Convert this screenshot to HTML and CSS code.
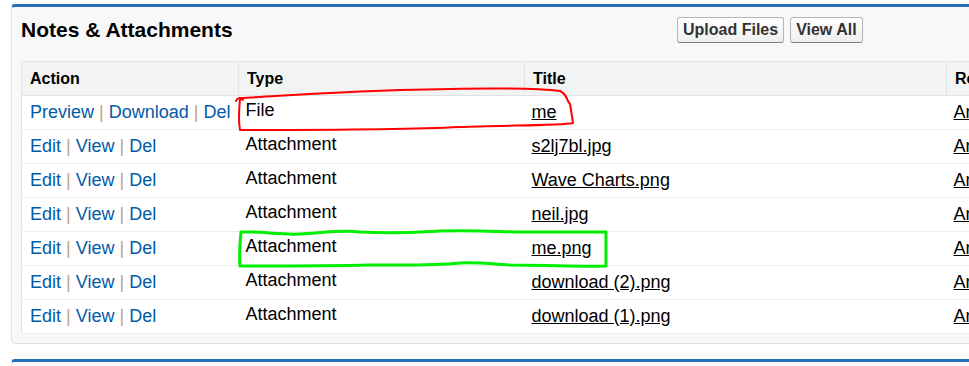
FILE: index.html
```html
<!DOCTYPE html>
<html>
<head>
<meta charset="utf-8">
<link rel="stylesheet" href="styles.css">
</head>
<body>
<div class="panel">
  <div class="panel-head">
    <h2 class="panel-title">Notes &amp; Attachments</h2>
    <div class="panel-buttons">
      <button class="btn">Upload Files</button>
      <button class="btn">View All</button>
    </div>
  </div>
  <table class="list">
    <colgroup>
      <col class="c-action"><col class="c-type"><col class="c-title"><col class="c-rel">
    </colgroup>
    <thead>
      <tr><th>Action</th><th>Type</th><th>Title</th><th>Related To</th></tr>
    </thead>
    <tbody>
      <tr>
        <td class="actions"><a>Preview</a> <span class="sep">|</span> <a>Download</a> <span class="sep">|</span> <a>Del</a></td>
        <td class="type">File</td>
        <td class="title"><a>me</a></td>
        <td class="rel"><a>Andrew</a></td>
      </tr>
      <tr>
        <td class="actions"><a>Edit</a> <span class="sep">|</span> <a>View</a> <span class="sep">|</span> <a>Del</a></td>
        <td class="type">Attachment</td>
        <td class="title"><a>s2lj7bl.jpg</a></td>
        <td class="rel"><a>Andrew</a></td>
      </tr>
      <tr>
        <td class="actions"><a>Edit</a> <span class="sep">|</span> <a>View</a> <span class="sep">|</span> <a>Del</a></td>
        <td class="type">Attachment</td>
        <td class="title"><a>Wave Charts.png</a></td>
        <td class="rel"><a>Andrew</a></td>
      </tr>
      <tr>
        <td class="actions"><a>Edit</a> <span class="sep">|</span> <a>View</a> <span class="sep">|</span> <a>Del</a></td>
        <td class="type">Attachment</td>
        <td class="title"><a>neil.jpg</a></td>
        <td class="rel"><a>Andrew</a></td>
      </tr>
      <tr>
        <td class="actions"><a>Edit</a> <span class="sep">|</span> <a>View</a> <span class="sep">|</span> <a>Del</a></td>
        <td class="type">Attachment</td>
        <td class="title"><a>me.png</a></td>
        <td class="rel"><a>Andrew</a></td>
      </tr>
      <tr>
        <td class="actions"><a>Edit</a> <span class="sep">|</span> <a>View</a> <span class="sep">|</span> <a>Del</a></td>
        <td class="type">Attachment</td>
        <td class="title"><a>download (2).png</a></td>
        <td class="rel"><a>Andrew</a></td>
      </tr>
      <tr>
        <td class="actions"><a>Edit</a> <span class="sep">|</span> <a>View</a> <span class="sep">|</span> <a>Del</a></td>
        <td class="type">Attachment</td>
        <td class="title"><a>download (1).png</a></td>
        <td class="rel"><a>Andrew</a></td>
      </tr>
    </tbody>
  </table>
</div>
<div class="panel panel-next"></div>

<svg class="marks" width="969" height="366" viewBox="0 0 969 366">
  <path class="mark-red" d="M243,100 Q238,96 236,101 M240,98 C280,96 330,92 400,90 C470,88 530,87 560,91 C568,95 566,100 570,104 C571,110 572,116 573,123 C560,126 500,125 460,127 C400,130 300,130 240,130 C238,120 239,110 240,99"/>
  <path class="mark-green" d="M241,232 C260,231 280,235 300,234 C330,232 345,230 360,232 C400,234 420,232 440,231 C480,230 500,232 520,232 C560,232 580,232 606,232 L606,266 C570,267 540,265 510,265 C490,264 480,262 460,263 C430,266 400,265 370,265 C330,266 290,266 240,266 C239,255 240,243 241,232"/>
</svg>
</body>
</html>
```
FILE: styles.css
```css
html, body {
  margin: 0;
  padding: 0;
  background: #ffffff;
  overflow: hidden;
  width: 969px;
  height: 366px;
}

body {
  position: relative;
  font-family: "Liberation Sans", Arial, sans-serif;
  color: #000;
}

.panel {
  box-sizing: border-box;
  width: 1000px;
  margin: 4px 0 0 11px;
  border: 1px solid #e0e3e5;
  border-top: 3px solid #236fbd;
  border-radius: 4px;
  background: #f8f8f8;
  padding: 0 0 9px 9px;
}

.panel-next {
  margin-top: 15px;
  height: 30px;
}

.panel-head {
  box-sizing: border-box;
  display: flex;
  align-items: flex-start;
  height: 54px;
  padding-top: 10px;
}

.panel-title {
  margin: 0;
  width: 656px;
  font-size: 21px;
  line-height: 26px;
  font-weight: bold;
}

.panel-buttons {
  display: flex;
  gap: 6px;
}

.btn {
  font-family: "Liberation Sans", Arial, sans-serif;
  font-weight: bold;
  font-size: 16px;
  color: #333;
  height: 26px;
  padding: 0 5px;
  border: 1px solid #b5b5b5;
  border-bottom-color: #7f7f7f;
  border-radius: 3px;
  background: linear-gradient(#ffffff, #efefef);
  line-height: 24px;
}

.list {
  border-collapse: collapse;
  table-layout: fixed;
  width: 1100px;
  background: #fff;
  border: 1px solid #e0e3e5;
  font-size: 18px;
}

.c-action { width: 217px; }
.c-type { width: 286px; }
.c-title { width: 422px; }
.c-rel { width: 175px; }

.list tr {
  height: 34px;
}

.list th {
  background: #f2f3f3;
  padding: 0 0 0 8px;
  text-align: left;
  font-size: 16px;
  line-height: 20px;
  font-weight: bold;
  border-bottom: 1px solid #e0e3e5;
  border-left: 1px solid #e0e3e5;
  white-space: nowrap;
}

.list td {
  padding: 0 0 0 8px;
  line-height: 21px;
  border-bottom: 1px solid #ededed;
  white-space: nowrap;
  vertical-align: middle;
}

.list td.type {
  padding-bottom: 4px;
  padding-left: 7px;
}

.list td.title,
.list td.rel {
  padding-left: 7px;
}

.actions a {
  color: #015ba7;
  text-decoration: none;
}

.sep {
  color: #c0a584;
}

.title a,
.rel a {
  color: #000;
  text-decoration: underline;
}

.marks {
  position: absolute;
  left: 0;
  top: 0;
  pointer-events: none;
}

.marks path {
  fill: none;
  stroke-linecap: round;
  stroke-linejoin: round;
}

.mark-red {
  stroke: #ff0000;
  stroke-width: 2;
}

.mark-green {
  stroke: #00ee00;
  stroke-width: 3;
}
```
